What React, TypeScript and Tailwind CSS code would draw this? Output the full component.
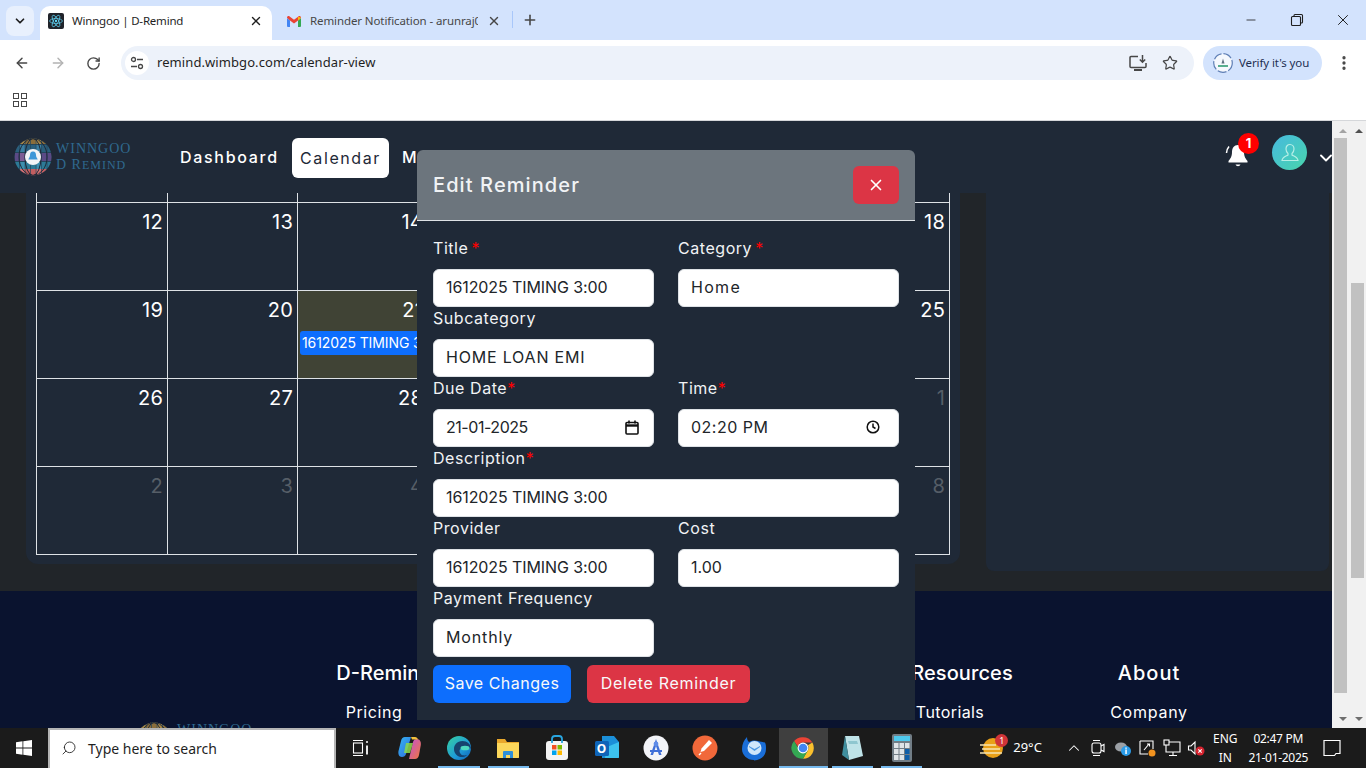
import React from "react";
import { ArrowLeft, ArrowRight, RotateCw, Star, X, Plus, ChevronDown, Search, Minus, EllipsisVertical, ChevronUp } from "lucide-react";

const ui = { fontFamily: '"Noto Sans", "Open Sans", sans-serif' };

function Globe({ size = 38 }: { size?: number }) {
  const rows = [
    { y: 0, h: 6, c: ["#8a6d3b", "#a58545", "#8a6d3b"] },
    { y: 7, h: 7, c: ["#2b5f7d", "#3b7ea1", "#2b5f7d"] },
    { y: 15, h: 8, c: ["#5b4a86", "#7d5c94", "#5b4a86"] },
    { y: 24, h: 7, c: ["#2c7a96", "#3d8fae", "#2c7a96"] },
    { y: 31, h: 7, c: ["#c25e60", "#d47072", "#c25e60"] },
  ];
  return (
    <svg width={size} height={size} viewBox="0 0 38 38" className="shrink-0">
      <defs>
        <clipPath id="globeclip"><circle cx="19" cy="19" r="18.5" /></clipPath>
      </defs>
      <g clipPath="url(#globeclip)">
        <rect width="38" height="38" fill="#24465c" />
        {rows.map((r, i) =>
          [0, 1, 2, 3, 4, 5, 6].map((k) => (
            <rect key={i + "-" + k} x={k * 5.5 + 0.4} y={r.y} width="4.8" height={r.h} fill={r.c[k % 3]} />
          ))
        )}
        <g fill="none" stroke="#1f2937" strokeWidth="1">
          <ellipse cx="19" cy="19" rx="8" ry="18.5" />
          <ellipse cx="19" cy="19" rx="14" ry="18.5" />
        </g>
      </g>
      <circle cx="19" cy="19" r="8" fill="#f2f4f6" />
      <path d="M19 13.5c-2.2 0-3 1.7-3 3.6 0 2-.9 3-1.6 3.8v.7h9.2v-.7c-.7-.8-1.6-1.8-1.6-3.8 0-1.9-.8-3.6-3-3.6z" fill="#3d97d8" />
    </svg>
  );
}

function LogoText() {
  return (
    <div className="flex flex-col text-[#2f6a8f] leading-[16px] tracking-[1px]" style={{ fontFamily: '"Liberation Serif", serif' }}>
      <span className="text-[14px]">WINNGOO</span>
      <span className="text-[14px]">D R<span className="text-[12px]">EMIND</span></span>
    </div>
  );
}

function Chrome() {
  return (
    <div className="flex flex-col shrink-0" style={ui}>
      <div className="h-[40px] bg-[#d3e3fd] flex items-end relative">
        <div className="absolute left-[6px] top-[6px] w-[28px] h-[30px] rounded-lg bg-[#e8f0fd] flex items-center justify-center">
          <ChevronDown size={14} strokeWidth={3} className="text-[#1f1f1f]" />
        </div>
        <div className="ml-[40px] w-[232px] h-[34px] bg-white rounded-t-[10px] flex items-center pl-[8px] pr-[9px] pb-[4px]">
          <div className="w-[16px] h-[16px] rounded-[2px] bg-[#20232a] flex items-center justify-center shrink-0">
            <svg width="14" height="14" viewBox="-12 -12 24 24" fill="none" stroke="#61dafb" strokeWidth="1.2">
              <circle r="2" fill="#61dafb" stroke="none" />
              <ellipse rx="11" ry="4.2" />
              <ellipse rx="11" ry="4.2" transform="rotate(60)" />
              <ellipse rx="11" ry="4.2" transform="rotate(120)" />
            </svg>
          </div>
          <span className="ml-[8px] text-[11.5px] tracking-[-0.200px] text-[#1f1f1f] whitespace-nowrap flex-1">Winngoo | D-Remind</span>
          <X size={14} strokeWidth={2.4} className="text-[#1f1f1f]" />
        </div>
        <div className="w-[241px] h-[34px] flex items-center pl-[15px] pr-[11px] pb-[4px] relative">
          <svg width="14" height="11" viewBox="0 0 14 11" className="shrink-0">
            <path d="M0 2v8a1 1 0 0 0 1 1h2V4.5z" fill="#4285f4" />
            <path d="M14 2v8a1 1 0 0 1-1 1h-2V4.5z" fill="#34a853" />
            <path d="M0 1.7C0 .3 1.5-.4 2.6.4L7 3.8 11.4.4C12.500-.4 14 .3 14 1.700L11 4.500 7 7.500 3 4.500z" fill="#ea4335" />
            <path d="M11 .8 14 1.700 11 4.500z" fill="#fbbc04" />
          </svg>
          <span className="ml-[9px] w-[168px] overflow-hidden text-[11.5px] tracking-[-0.100px] text-[#474747] whitespace-nowrap">Reminder Notification - arunraj0</span>
          <X size={14} strokeWidth={2.4} className="ml-[9px] text-[#474747] shrink-0" />
          <div className="absolute right-[0px] top-[5px] w-[1px] h-[17px] bg-[#a8c7fa]" />
        </div>
        <div className="h-[34px] flex items-center pl-[9px] pb-[6px]">
          <Plus size={16} strokeWidth={2.4} className="text-[#474747]" />
        </div>
        <div className="flex-1" />
        <div className="h-[40px] flex items-center text-[#1f1f1f] pr-[14px]">
          <Minus size={14} strokeWidth={1.4} />
          <svg width="14" height="14" viewBox="0 0 14 14" fill="none" stroke="#1f1f1f" strokeWidth="1.1" className="ml-[32px]">
            <rect x="1.500" y="3.500" width="9" height="9" rx="1" />
            <path d="M4 3.500V2.500a1 1 0 0 1 1-1h6.500a1 1 0 0 1 1 1V9a1 1 0 0 1-1 1h-1" />
          </svg>
          <X size={18} strokeWidth={1.3} className="ml-[30px]" />
        </div>
      </div>
      <div className="h-[40px] bg-white rounded-t-[8px] flex items-center relative">
        <div className="w-[121px] flex items-center pl-[14px] gap-[20px] text-[#474747] mt-[6px]">
          <ArrowLeft size={16} strokeWidth={2.2} />
          <ArrowRight size={16} strokeWidth={2.2} className="text-[#b3b3b3]" />
          <RotateCw size={15} strokeWidth={2.2} />
        </div>
        <div className="w-[1073px] h-[34px] mt-[6px] rounded-full bg-[#edf2fa] flex items-center pl-[4px] pr-[16px]">
          <div className="w-[24px] h-[24px] rounded-full bg-white flex items-center justify-center">
            <svg width="14" height="14" viewBox="0 0 14 14" fill="none" stroke="#474747" strokeWidth="1.3">
              <circle cx="3.500" cy="3.500" r="2" />
              <path d="M7 3.500h6M1 10.500h6" />
              <circle cx="10.500" cy="10.500" r="2" />
            </svg>
          </div>
          <span className="ml-[8px] text-[13px] text-[#1f1f1f] tracking-[0.080px] flex-1">remind.wimbgo.com/calendar-view</span>
          <svg width="18" height="16" viewBox="0 0 18 16" fill="none" stroke="#474747" strokeWidth="1.500" className="mr-[15px]">
            <path d="M9 1.500H2a1 1 0 0 0-1 1v9a1 1 0 0 0 1 1h14a1 1 0 0 0 1-1V8" />
            <path d="M5 15h8" strokeWidth="2" />
            <path d="M13.500 0v7M10.800 4.500l2.700 2.700 2.700-2.700" />
          </svg>
          <Star size={16} strokeWidth={1.800} className="text-[#474747]" />
        </div>
        <div className="ml-[9px] w-[119px] h-[34px] mt-[6px] rounded-full bg-[#d3e3fd] flex items-center pl-[10px]">
          <svg width="20" height="20" viewBox="0 0 20 20" className="shrink-0">
            <circle cx="10" cy="10" r="9.300" fill="#f5f8fd" stroke="#5f7fb5" strokeWidth="1.200" strokeDasharray="9 2" />
            <path d="M10 5.500l1.500 5h-3z" fill="#5e6f7f" />
            <rect x="5" y="12" width="10" height="2" fill="#57ae8e" />
          </svg>
          <span className="ml-[6px] text-[11.5px] tracking-[-0.100px] text-[#1e2f52] whitespace-nowrap">Verify it's you</span>
        </div>
        <div className="ml-[13px] mt-[6px]">
          <EllipsisVertical size={18} strokeWidth={2.400} className="text-[#474747]" />
        </div>
      </div>
      <div className="h-[41px] bg-white border-b border-[#d5d7da] flex items-center pl-[13px] pt-[1px]">
        <div className="grid grid-cols-2 gap-[2px] mt-[-2px]">
          {[0, 1, 2, 3].map((i) => <div key={i} className="w-[6px] h-[6px] border-[1.500px] border-[#474747]" />)}
        </div>
      </div>
    </div>
  );
}

function Nav() {
  return (
    <div className="h-[72px] bg-[#1f2937] flex items-center shrink-0 relative">
      <div className="ml-[14px] flex items-center gap-[4px] w-[150px]">
        <Globe />
        <LogoText />
      </div>
      <div className="ml-[16px] flex items-center text-[16px] font-medium tracking-[1.700px] text-white">
        <span className="w-[112px]">Dashboard</span>
        <span className="w-[97px] h-[40px] mt-[2px] rounded-[6px] bg-white text-[#1f2937] flex items-center justify-center font-normal tracking-[1.600px]">Calendar</span>
        <span className="ml-[13px]">Manage</span>
      </div>
      <div className="flex-1" />
      <div className="relative w-[26px] h-[26px] mr-[21px] mt-[-4px]">
        <svg width="26" height="26" viewBox="0 0 26 26" className="text-white">
          <path d="M13 3c-4 0-6 3-6 7 0 5-2 7-3.500 9v1.500h19V19c-1.500-2-3.500-4-3.500-9 0-4-2-7-6-7z" fill="white" />
          <path d="M10.500 22.500a2.700 2.700 0 0 0 5 0z" fill="white" />
          <path d="M1.500 11c0-2.500 1-4.700 2.500-6.500" stroke="white" strokeWidth="1.500" fill="none" />
        </svg>
        <span className="absolute left-[13px] top-[-9px] w-[21px] h-[21px] rounded-full bg-[#ff0000] text-white text-[13px] font-bold flex items-center justify-center">1</span>
      </div>
      <div className="w-[35px] h-[35px] rounded-full bg-gradient-to-br from-[#48b9de] to-[#49d4aa] flex items-center justify-center mr-[10px] mt-[-9px]">
        <svg width="22" height="22" viewBox="0 0 22 22" fill="none" stroke="#b5eee6" strokeWidth="1.200">
          <path d="M11 2.500c-2.500 0-4 2-4 4.500 0 2 1 3.500 2 4.500v1.500c-1 1-5.500 1.500-6 5.500h16c-.5-4-5-4.500-6-5.500v-1.500c1-1 2-2.500 2-4.500 0-2.500-1.500-4.500-4-4.500z" />
        </svg>
      </div>
      <div className="w-[15px] overflow-hidden shrink-0 mt-[2px]">
        <ChevronDown size={20} strokeWidth={2.200} className="text-white -ml-[1px]" />
      </div>
    </div>
  );
}

const weeks: { d: number; muted?: boolean; today?: boolean; event?: boolean }[][] = [
  [{ d: 12 }, { d: 13 }, { d: 14 }, { d: 15 }, { d: 16 }, { d: 17 }, { d: 18 }],
  [{ d: 19 }, { d: 20 }, { d: 21, today: true, event: true }, { d: 22 }, { d: 23 }, { d: 24 }, { d: 25 }],
  [{ d: 26 }, { d: 27 }, { d: 28 }, { d: 29 }, { d: 30 }, { d: 31 }, { d: 1, muted: true }],
  [{ d: 2, muted: true }, { d: 3, muted: true }, { d: 4, muted: true }, { d: 5, muted: true }, { d: 6, muted: true }, { d: 7, muted: true }, { d: 8, muted: true }],
];

const cols = "grid grid-cols-[131px_130px_130px_131px_130px_131px_130px]";

function Calendar() {
  return (
    <div className="w-[934px] h-[371px] bg-[#1f2937] rounded-b-xl px-[10px] shrink-0">
      <div className={cols + " h-[9px] border-l border-[#dee2e6] w-[914px]"}>
        {[0, 1, 2, 3, 4, 5, 6].map((i) => <div key={i} className="border-r border-[#dee2e6]" />)}
      </div>
      <div className="border-l border-t border-[#dee2e6] w-[914px]">
        {weeks.map((w, i) => (
          <div key={i} className={cols + " h-[88px] border-b border-[#dee2e6]"}>
            {w.map((c) => (
              <div key={c.d} className={"border-r border-[#dee2e6] px-[2px] pt-[5px] " + (c.today ? "bg-[#404335]" : "")}>
                <div className={"text-right text-[20px] leading-[28px] pr-[2px] tracking-[0.200px] " + (c.muted ? "text-[#565e67]" : "text-white")}>{c.d}</div>
                {c.event && (
                  <div className="mt-[7px] h-[24px] bg-[#0d6efd] rounded-[3px] text-white text-[14px] leading-[24px] px-[2px] whitespace-nowrap overflow-hidden tracking-[-0.100px]">1612025 TIMING 3:00</div>
                )}
              </div>
            ))}
          </div>
        ))}
      </div>
    </div>
  );
}

function Footer() {
  return (
    <div className="h-[137px] bg-[#0a132f] flex text-white shrink-0 overflow-hidden">
      <div className="w-[338px] pl-[135px] pt-[131px] flex items-start gap-[4px] shrink-0">
        <Globe />
        <LogoText />
      </div>
      <div className="pt-[68px] w-[574px] shrink-0">
        <div className="w-[92px] flex flex-col items-center">
          <div className="text-[20px] leading-[28px] font-medium whitespace-nowrap">D-Remind</div>
          <div className="mt-[13px] pr-[20px] text-[16px] leading-[24px] tracking-[0.550px]">Pricing</div>
        </div>
      </div>
      <div className="pt-[68px] w-[199px] shrink-0">
        <div className="w-[100px] flex flex-col items-center">
          <div className="text-[20px] leading-[28px] font-medium tracking-[0.100px]">Resources</div>
          <div className="mt-[13px] pr-[24px] text-[16px] leading-[24px] tracking-[0.400px]">Tutorials</div>
        </div>
      </div>
      <div className="pt-[68px] -ml-[1px]">
        <div className="w-[78px] flex flex-col items-center">
          <div className="text-[20px] leading-[28px] font-medium tracking-[1px]">About</div>
          <div className="mt-[13px] text-[16px] leading-[24px] tracking-[0.750px]">Company</div>
        </div>
      </div>
    </div>
  );
}

function Field({ label, star, gap, value, track, right, className = "" }: { label: string; star?: boolean; gap?: boolean; value: string; track: string; right?: React.ReactNode; className?: string }) {
  return (
    <div className={className}>
      <div className="h-[24px] text-[16px] leading-[22px] text-[#f1f3f5] tracking-[0.550px] whitespace-nowrap">
        {label}{star && <span className={"text-[#ff0000] " + (gap ? "ml-[3px]" : "")}>*</span>}
      </div>
      <div className="mt-[8px] h-[38px] bg-white border border-[#dee2e6] rounded-[6px] flex items-center pl-[12px] pr-[16px] pb-[2px] text-[16px] text-[#212529] whitespace-nowrap">
        <span className={"flex-1 " + track}>{value}</span>
        {right}
      </div>
    </div>
  );
}

function Modal() {
  return (
    <div className="absolute left-[417px] top-[29px] w-[498px] h-[570px] bg-[#1f2937] rounded-t-[6px] flex flex-col">
      <div className="h-[71px] bg-[#6c757d] border-b border-[#dee2e6] rounded-t-[6px] flex items-center justify-between px-[16px] shrink-0">
        <span className="text-[20px] font-medium text-[#f1f3f5] tracking-[1.100px]">Edit Reminder</span>
        <div className="w-[46px] h-[38px] rounded-[6px] bg-[#dc3545] flex items-center justify-center">
          <X size={18} strokeWidth={2.200} className="text-white" />
        </div>
      </div>
      <div className="px-[16px] pt-[16px]">
        <div className="grid grid-cols-2 gap-x-[24px]">
          <Field label="Title" star gap value="1612025 TIMING 3:00" track="tracking-[-0.100px]" />
          <Field label="Category" star gap value="Home" track="tracking-[1.300px]" />
          <Field label="Subcategory" value="HOME LOAN EMI" track="tracking-[0.800px]" className="col-start-1" />
          <div />
          <Field label="Due Date" star value="21-01-2025" track="tracking-[-0.450px]" right={
            <svg width="14" height="15" viewBox="0 0 14 15" fill="none" stroke="#111" strokeWidth="1.600" className="-mr-[2px]">
              <rect x="1" y="2.500" width="12" height="11.500" rx="1" />
              <path d="M1 5.500h12" strokeWidth="2.400" />
              <path d="M4 .5v3M10 .5v3" />
            </svg>
          } />
          <Field label="Time" star value="02:20 PM" track="tracking-[0.500px]" right={
            <svg width="14" height="14" viewBox="0 0 14 14" fill="none" stroke="#111" strokeWidth="1.500" className="mr-[2px]">
              <circle cx="7" cy="7" r="5.800" />
              <path d="M7 3.500V7l2.500 1.500" />
            </svg>
          } />
          <Field label="Description" star value="1612025 TIMING 3:00" track="tracking-[-0.100px]" className="col-span-2" />
          <Field label="Provider" value="1612025 TIMING 3:00" track="tracking-[-0.100px]" />
          <Field label="Cost" value="1.00" track="tracking-[0px]" />
          <Field label="Payment Frequency" value="Monthly" track="tracking-[0.850px]" />
        </div>
        <div className="mt-[8px] flex gap-[16px] text-[16px] text-[#f8f9fa]">
          <div className="w-[138px] h-[38px] pb-[2px] rounded-[6px] bg-[#0d6efd] flex items-center justify-center whitespace-nowrap tracking-[0.500px]">Save Changes</div>
          <div className="w-[163px] h-[38px] pb-[2px] rounded-[6px] bg-[#dc3545] flex items-center justify-center whitespace-nowrap tracking-[0.700px]">Delete Reminder</div>
        </div>
      </div>
    </div>
  );
}

function Scrollbars() {
  return (
    <div className="w-[34px] bg-[#f1f1f1] flex shrink-0">
      <div className="w-[19px] pl-[2px] flex flex-col relative">
        <div className="h-[17px] flex items-center justify-center pt-[2px]"><div className="w-0 h-0 border-x-[4px] border-x-transparent border-b-[4px] border-b-[#a3a3a3]" /></div>
        <div className="mt-[0px] h-[555px] w-[13px] bg-[#c1c1c1]" />
        <div className="flex-1 flex items-end justify-center pb-[7px]"><div className="w-0 h-0 border-x-[4px] border-x-transparent border-t-[4px] border-t-[#6e6e6e]" /></div>
      </div>
      <div className="w-[15px] flex flex-col">
        <div className="h-[17px] flex items-center justify-center pt-[2px]"><div className="w-0 h-0 border-x-[4px] border-x-transparent border-b-[4px] border-b-[#505050]" /></div>
        <div className="mt-[145px] h-[295px] w-[13px] bg-[#c1c1c1]" />
        <div className="flex-1 flex items-end justify-center pb-[7px]"><div className="w-0 h-0 border-x-[4px] border-x-transparent border-t-[4px] border-t-[#6e6e6e]" /></div>
      </div>
    </div>
  );
}

function TB({ w = 49.2, active, line, children }: { w?: number; active?: boolean; line?: boolean; children: React.ReactNode }) {
  return (
    <div className={"h-[40px] flex items-center justify-center relative shrink-0 " + (active ? "bg-[#3f3f3f]" : "")} style={{ width: w }}>
      {children}
      {line && <div className={"absolute bottom-0 h-[2px] bg-[#76b9ed] " + (active ? "left-0 right-0" : "left-[4px] right-[4px]")} />}
    </div>
  );
}

function Taskbar() {
  return (
    <div className="h-[40px] bg-[#1b1b1b] flex items-center shrink-0 text-white overflow-hidden" style={ui}>
      <div className="w-[48px] flex justify-center shrink-0">
        <svg width="16" height="16" viewBox="0 0 16 16" fill="white">
          <path d="M0 2.300 6.500 1.300V7.500H0zM7.300 1.200 16 0v7.500H7.300zM0 8.400h6.500v6.300L0 13.700zM7.300 8.400H16V16l-8.700-1.200z" />
        </svg>
      </div>
      <div className="w-[288px] h-[40px] shrink-0 bg-white border-2 border-[#b5b5b5] border-b-0 flex items-center pl-[11px] pb-[2px] text-[#1f1f1f]">
        <Search size={16} strokeWidth={1.300} className="-scale-x-100 text-[#222]" />
        <span className="ml-[11px] text-[14px]">Type here to search</span>
      </div>
      <TB>
        <svg width="18" height="18" viewBox="0 0 18 18" fill="none" stroke="white" strokeWidth="1.100">
          <path d="M1 1.500h10M1 16.500h10" /><rect x="1.500" y="4" width="9" height="10" />
          <circle cx="15" cy="3" r="1" fill="white" stroke="none" /><path d="M15 6.500v9" strokeWidth="1.800" />
        </svg>
      </TB>
      <TB>
        <svg width="26" height="26" viewBox="0 0 26 26">
          <defs>
            <linearGradient id="cpa" x1="0" y1="0" x2="1" y2="1"><stop offset="0" stopColor="#35b6f0" /><stop offset="1" stopColor="#2f6be0" /></linearGradient>
            <linearGradient id="cpb" x1="0" y1="0" x2="1" y2="1"><stop offset="0" stopColor="#c04fd8" /><stop offset="1" stopColor="#f07a3a" /></linearGradient>
          </defs>
          <path d="M8 2h6l-5 17c-.5 2-2 3-4 3-3 0-4-3-3.500-6L4 6c.5-2.500 2-4 4-4z" fill="url(#cpa)" />
          <path d="M12 24h6c2 0 3.500-1.500 4-4l1.800-10c.5-3-1-6-3.800-6-2 0-3.500 1-4 3z" fill="url(#cpb)" />
          <path d="M9 8h7l-3 10H7z" fill="#8bd94b" opacity="0.850" />
          <path d="M14 2h4c1.500 0 2.500 1 3 2.500h-6z" fill="#f4c23c" />
        </svg>
      </TB>
      <TB line>
        <svg width="26" height="26" viewBox="0 0 26 26">
          <defs><linearGradient id="edg" x1="0" y1="0" x2="1" y2="1"><stop offset="0" stopColor="#37d0a0" /><stop offset="0.600" stopColor="#1e9bd8" /><stop offset="1" stopColor="#0e5fb5" /></linearGradient></defs>
          <circle cx="13" cy="13" r="12" fill="url(#edg)" />
          <path d="M25 14c0-5-4-8-8.500-8C11 6 8 10 8 14c0 5 4 8.500 9 8 2-.2 3-1 4-2-3 1-7 .5-7.500-4 0-1 .5-2 1.500-2.500h10z" fill="#16436f" />
          <ellipse cx="19" cy="13" rx="4.500" ry="2.300" fill="#4ed9c0" />
        </svg>
      </TB>
      <TB line>
        <svg width="24" height="22" viewBox="0 0 24 22">
          <path d="M1 2h8l2 3h12v15a1 1 0 0 1-1 1H2a1 1 0 0 1-1-1z" fill="#e9a82c" />
          <path d="M1 6h22v14a1 1 0 0 1-1 1H2a1 1 0 0 1-1-1z" fill="#fbd75b" />
          <path d="M7 21v-6a1 1 0 0 1 1-1h8a1 1 0 0 1 1 1v6h-3v-3h-4v3z" fill="#2f8fd8" />
        </svg>
      </TB>
      <TB>
        <svg width="24" height="26" viewBox="0 0 24 26">
          <rect x="1" y="6" width="22" height="19" rx="3" fill="#f4f4f4" />
          <path d="M7 8V4a3 3 0 0 1 3-3h4a3 3 0 0 1 3 3v4" fill="none" stroke="#29a6e0" strokeWidth="1.800" />
          <rect x="7" y="10" width="4.500" height="4.500" fill="#f25022" /><rect x="12.500" y="10" width="4.500" height="4.500" fill="#7fba00" />
          <rect x="7" y="15.500" width="4.500" height="4.500" fill="#00a4ef" /><rect x="12.500" y="15.500" width="4.500" height="4.500" fill="#ffb900" />
        </svg>
      </TB>
      <TB>
        <div className="relative w-[26px] h-[26px]">
          <svg width="26" height="26" viewBox="0 0 26 26" className="absolute inset-0">
            <path d="M8 1h12l5 6v15a1 1 0 0 1-1 1H8z" fill="#1b8fd8" /><path d="M13 12l12-5v15a1 1 0 0 1-1 1H11z" fill="#3cc2ee" />
            <rect x="1" y="6" width="14" height="15" rx="1.500" fill="#0f64b8" />
          </svg>
          <span className="absolute left-[1px] top-[6px] w-[14px] h-[15px] flex items-center justify-center text-white text-[12px] font-bold">O</span>
        </div>
      </TB>
      <TB>
        <svg width="26" height="26" viewBox="0 0 26 26">
          <circle cx="13" cy="13" r="12.500" fill="#f3f4f8" />
          <path d="M13 4l5.500 16h-2.500l-3-9-3 9H7.500z" fill="#3f6fd8" />
          <circle cx="13" cy="9" r="2.400" fill="#5e8be8" />
          <path d="M7 15h12v2H7z" fill="#3f6fd8" />
        </svg>
      </TB>
      <TB>
        <svg width="26" height="26" viewBox="0 0 26 26">
          <circle cx="13" cy="13" r="12.500" fill="#f1683a" />
          <path d="M17 5l3 3-8 8-3.500 1 1-3.500z" fill="#fff" /><path d="M9 18l-2 2" stroke="#fff" strokeWidth="1.500" />
        </svg>
      </TB>
      <TB>
        <svg width="26" height="26" viewBox="0 0 26 26">
          <path d="M13 25C6 25 1 20 1 14 1 9 3 5 6 2c0 3 1 4 2 5 2-1.500 6-2 9-1 3 1 5 1 7 1.500 1 2 1 4 1 6.500 0 6.500-5 11.500-12 11.500z" fill="#1a6ed8" />
          <circle cx="13.500" cy="13" r="7" fill="#cfe6fa" />
          <path d="M8 12l5.500 4 5.500-4v-1l-5.500 3L8 11z" fill="#4c96e0" />
        </svg>
      </TB>
      <TB active line>
        <svg width="26" height="26" viewBox="0 0 48 48">
          <path d="M24 4a20 20 0 0 1 17.300 10H24a10 10 0 0 0-9.500 7L7.500 11A20 20 0 0 1 24 4z" fill="#ea4335" />
          <path d="M41.300 14A20 20 0 0 1 24 44l8.600-15A10 10 0 0 0 33 19z" fill="#fbc02d" />
          <path d="M7.500 11l8.600 15a10 10 0 0 0 16.500 3L24 44A20 20 0 0 1 7.500 11z" fill="#34a853" />
          <circle cx="24" cy="24" r="10" fill="#fff" />
          <circle cx="24" cy="24" r="8" fill="#4285f4" />
        </svg>
      </TB>
      <TB line>
        <svg width="26" height="26" viewBox="0 0 26 26">
          <path d="M6 1h14l4 20-14 4z" fill="#bfe3e8" /><path d="M6 1l4 24-7-5z" fill="#3f8e9e" /><path d="M9 6h9l1 3H10z" fill="#8fc6cf" />
        </svg>
      </TB>
      <TB line>
        <svg width="20" height="28" viewBox="0 0 20 28">
          <rect width="20" height="28" rx="2" fill="#717d86" />
          <rect x="2" y="2" width="16" height="5" fill="#4ec9ee" />
          {[0, 1, 2].map((r) => [0, 1, 2].map((k) => (
            <rect key={r + "" + k} x={2 + k * 5.500} y={9 + r * 6} width="4.500" height="5" fill={k === 2 && r > 0 ? "#0f5ea8" : "#dfe4e8"} />
          )))}
        </svg>
      </TB>
      <div className="ml-[50px] w-[32px] flex justify-center relative shrink-0">
        <svg width="26" height="24" viewBox="0 0 26 24">
          <circle cx="14" cy="12" r="10" fill="#e8a018" />
          <path d="M1 9h16M3 13h18M1 17h22" stroke="#f6e3b0" strokeWidth="1.500" />
        </svg>
        <span className="absolute right-[0px] top-[-2px] w-[13px] h-[13px] rounded-full bg-[#d13438] text-[9px] flex items-center justify-center">1</span>
      </div>
      <span className="ml-[5px] text-[13px] w-[52px] shrink-0 whitespace-nowrap">29°C</span>
      <ChevronUp size={18} strokeWidth={1.400} className="shrink-0" />
      <div className="ml-[6px] flex items-center gap-[6.500px] shrink-0">
        <svg width="18" height="18" viewBox="0 0 18 18" fill="none" stroke="white" strokeWidth="1.100"><rect x="3" y="4" width="9" height="10" rx="2" /><path d="M12 7l3-1.500v7L12 11M4 1.500h7M4 16.500h7" /></svg>
        <svg width="18" height="18" viewBox="0 0 18 18"><ellipse cx="7" cy="8" rx="6" ry="4.500" fill="#9ba0a5" /><circle cx="12" cy="12" r="5" fill="#2b9ce8" /><rect x="11.300" y="10.500" width="1.500" height="4.500" fill="#fff" /><rect x="11.300" y="8.500" width="1.500" height="1.300" fill="#fff" /></svg>
        <svg width="18" height="18" viewBox="0 0 18 18" fill="none" stroke="white" strokeWidth="1.100"><path d="M2 2h13v8M2 2v13h8" /><path d="M6 11l5-6M9 5h2.500v2.500" /><circle cx="14" cy="14" r="3.500" fill="#f2931f" stroke="none" /></svg>
        <svg width="18" height="18" viewBox="0 0 18 18" fill="none" stroke="white" strokeWidth="1.100"><rect x="1" y="1" width="5" height="5" /><path d="M6 3h11v10H3V6M10 13v3M6 16.500h8" /></svg>
        <svg width="18" height="18" viewBox="0 0 18 18" fill="none" stroke="white" strokeWidth="1.100"><path d="M1.500 7h2.500l4-4v12l-4-4H1.500z" /><circle cx="13" cy="12" r="4.500" fill="#d6232f" stroke="none" /><path d="M11.300 10.300l3.400 3.400M14.700 10.300l-3.400 3.400" stroke="#fff" /></svg>
      </div>
      <div className="ml-[4px] w-[32px] shrink-0 text-[12px] leading-[19px] text-center flex flex-col"><span>ENG</span><span>IN</span></div>
      <div className="ml-[4px] w-[66px] shrink-0 text-[12px] tracking-[-0.300px] leading-[19px] text-center flex flex-col whitespace-nowrap"><span>02:47 PM</span><span>21-01-2025</span></div>
      <div className="ml-[12px] shrink-0">
        <svg width="18" height="18" viewBox="0 0 18 18" fill="none" stroke="white" strokeWidth="1.200"><path d="M1 1.500h16v13h-4l-1.500 2H1z" /></svg>
      </div>
    </div>
  );
}

export default function App() {
  return (
    <div className="w-[1366px] h-[768px] overflow-hidden flex flex-col" style={{ fontFamily: 'Inter, "Open Sans", sans-serif' }}>
      <Chrome />
      <div className="h-[607px] flex shrink-0">
        <div className="w-[1332px] relative flex flex-col overflow-hidden">
          <Nav />
          <div className="h-[398px] bg-[#212529] flex pl-[26px] gap-[26px] shrink-0">
            <Calendar />
            <div className="w-[343px] h-[378px] bg-[#1f2937] rounded-b-lg shrink-0" />
          </div>
          <Footer />
          <Modal />
        </div>
        <Scrollbars />
      </div>
      <Taskbar />
    </div>
  );
}
